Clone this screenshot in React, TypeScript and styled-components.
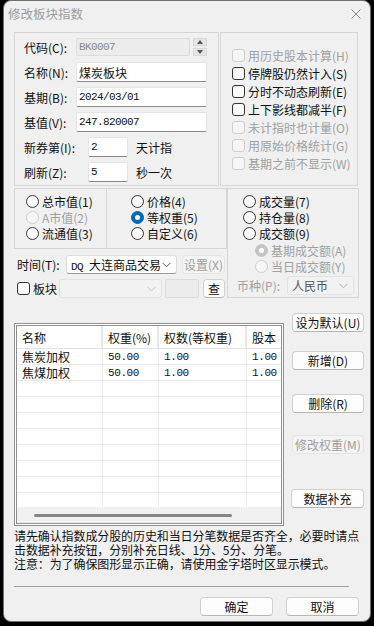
import React from "react";
import styled, { createGlobalStyle } from "styled-components";

const GlobalStyle = createGlobalStyle`
  * { box-sizing: border-box; }
  html, body {
    margin: 0;
    padding: 0;
    background: #000;
  }
  body {
    width: 374px;
    height: 626px;
    overflow: hidden;
    font-family: "Noto Sans CJK SC", "Noto Sans", sans-serif;
    font-size: 12px;
    color: #111;
  }
`;

const MONO = `"Liberation Mono", "Noto Sans CJK SC", monospace`;

const Dialog = styled.div`
  width: 368px;
  height: 622px;
  margin-left: 3px;
  background: #f0f0f0;
  border: 1px solid #707070;
  border-radius: 8px;
  overflow: hidden;
  display: flex;
  flex-direction: column;
`;

const TitleBar = styled.div`
  height: 31px;
  flex: none;
  display: flex;
  align-items: center;
  justify-content: space-between;
  padding: 0 9px 6px 4px;
  color: #9c9c9c;
  font-size: 12.5px;
`;

const Body = styled.div`
  padding-left: 10px;
  display: flex;
  flex-direction: column;
`;

const Row = styled.div<{ $gap?: number; $mt?: number }>`
  display: flex;
  gap: ${(p) => p.$gap ?? 0}px;
  margin-top: ${(p) => p.$mt ?? 0}px;
`;

const GroupBox = styled.div<{ $w: number; $h: number; $pt?: number; $pl?: number }>`
  width: ${(p) => p.$w}px;
  height: ${(p) => p.$h}px;
  flex: none;
  border: 1px solid #d6d6d6;
  padding: ${(p) => p.$pt ?? 0}px 0 0 ${(p) => p.$pl ?? 0}px;
  & + & {
    margin-left: -1px;
  }
`;

const FieldRow = styled.div<{ $mt?: number }>`
  display: flex;
  align-items: center;
  height: 20px;
  margin-top: ${(p) => p.$mt ?? 0}px;
`;

const Label = styled.span<{ $w: number; $disabled?: boolean }>`
  width: ${(p) => p.$w}px;
  flex: none;
  white-space: nowrap;
  color: ${(p) => (p.$disabled ? "#a0a0a0" : "#111")};
`;

const Field = styled.div<{ $w: number; $h?: number; $mono?: boolean; $disabled?: boolean }>`
  width: ${(p) => p.$w}px;
  height: ${(p) => p.$h ?? 20}px;
  flex: none;
  display: flex;
  align-items: center;
  padding-left: 2px;
  background: ${(p) => (p.$disabled ? "#ececec" : "#ffffff")};
  border: 1px solid ${(p) => (p.$disabled ? "#dcdcdc" : "#e4e4e4")};
  border-bottom-color: ${(p) => (p.$disabled ? "#dcdcdc" : "#8a8a8a")};
  border-radius: 2px;
  color: ${(p) => (p.$disabled ? "#8a8a8a" : "#111")};
  font-family: ${(p) => (p.$mono ? MONO : "inherit")};
  font-size: ${(p) => (p.$mono ? "11px" : "12px")};
  letter-spacing: ${(p) => (p.$mono ? "-0.6px" : "0")};
  white-space: nowrap;
  overflow: hidden;
`;

const Suffix = styled.span`
  margin-left: 8px;
`;

const Spin = styled.div`
  width: 14px;
  height: 18px;
  margin-left: 3px;
  display: flex;
  flex-direction: column;
  justify-content: space-between;
`;

const SpinPart = styled.div`
  height: 8px;
  background: #e6e6e6;
  border: 1px solid #d8d8d8;
  display: flex;
  align-items: center;
  justify-content: center;
`;

const OptionRow = styled.div<{ $h?: number; $indent?: number; $mt?: number }>`
  display: flex;
  align-items: center;
  gap: 3px;
  height: ${(p) => p.$h ?? 16}px;
  margin-left: ${(p) => p.$indent ?? 0}px;
  margin-top: ${(p) => p.$mt ?? 0}px;
  white-space: nowrap;
`;

const OptionText = styled.span<{ $disabled?: boolean }>`
  color: ${(p) => (p.$disabled ? "#a0a0a0" : "#111")};
`;

const Check = styled.span<{ $disabled?: boolean }>`
  width: 13px;
  height: 13px;
  flex: none;
  border: 1px solid ${(p) => (p.$disabled ? "#cfcfcf" : "#333")};
  border-radius: 3px;
  background: ${(p) => (p.$disabled ? "#f6f6f6" : "#fbfbfb")};
`;

const Radio = styled.span<{ $checked?: boolean; $disabled?: boolean }>`
  width: 13px;
  height: 13px;
  flex: none;
  border-radius: 50%;
  display: flex;
  align-items: center;
  justify-content: center;
  border: 1px solid
    ${(p) => (p.$checked ? (p.$disabled ? "#c4c4c4" : "#0067c0") : p.$disabled ? "#cfcfcf" : "#333")};
  background: ${(p) => (p.$checked ? (p.$disabled ? "#c4c4c4" : "#0067c0") : p.$disabled ? "#f6f6f6" : "#fbfbfb")};
  &::after {
    content: "";
    display: ${(p) => (p.$checked ? "block" : "none")};
    width: 5px;
    height: 5px;
    border-radius: 50%;
    background: #fff;
  }
`;

const Select = styled.div<{ $w: number; $disabled?: boolean }>`
  width: ${(p) => p.$w}px;
  height: 19px;
  flex: none;
  display: flex;
  align-items: center;
  justify-content: space-between;
  padding: 0 5px 0 4px;
  background: ${(p) => (p.$disabled ? "#f2f2f2" : "#fff")};
  border: 1px solid ${(p) => (p.$disabled ? "#e2e2e2" : "#dcdcdc")};
  border-bottom-color: ${(p) => (p.$disabled ? "#e2e2e2" : "#9a9a9a")};
  border-radius: 3px;
  white-space: nowrap;
  color: ${(p) => (p.$disabled ? "#555" : "#111")};
`;

const Mono = styled.span`
  font-family: ${MONO};
  font-size: 11px;
  letter-spacing: -0.6px;
  margin-right: 6px;
`;

const Button = styled.div<{ $w: number; $h?: number; $mt?: number; $ml?: number; $disabled?: boolean }>`
  width: ${(p) => p.$w}px;
  height: ${(p) => p.$h ?? 19}px;
  margin-top: ${(p) => p.$mt ?? 0}px;
  margin-left: ${(p) => p.$ml ?? 0}px;
  flex: none;
  display: flex;
  align-items: center;
  justify-content: center;
  white-space: nowrap;
  background: ${(p) => (p.$disabled ? "#f4f4f4" : "#fdfdfd")};
  border: 1px solid ${(p) => (p.$disabled ? "#e4e4e4" : "#d0d0d0")};
  border-bottom-color: ${(p) => (p.$disabled ? "#e4e4e4" : "#b5b5b5")};
  border-radius: 4px;
  color: ${(p) => (p.$disabled ? "#a0a0a0" : "#111")};
`;

const LeftCol = styled.div`
  width: 213px;
  flex: none;
  display: flex;
  flex-direction: column;
`;

const ToolRow = styled.div<{ $mt: number }>`
  display: flex;
  align-items: center;
  height: 19px;
  margin-top: ${(p) => p.$mt}px;
  padding-left: 3px;
`;

const CheckLabel = styled.div`
  width: 42px;
  flex: none;
  display: flex;
  align-items: center;
  gap: 3px;
`;

const Table = styled.div`
  width: 270px;
  height: 203px;
  margin-top: 10px;
  flex: none;
  border: 3px double #8f8f8f;
  background: #fff;
  display: flex;
  flex-direction: column;
  overflow: hidden;
`;

const GridRow = styled.div<{ $header?: boolean }>`
  display: grid;
  grid-template-columns: 86px 56px 88px 60px;
  height: ${(p) => (p.$header ? 23 : 16)}px;
  flex: none;
  border-bottom: 1px solid ${(p) => (p.$header ? "#e2e2e2" : "#ececec")};
`;

const Cell = styled.div<{ $header?: boolean; $mono?: boolean }>`
  display: flex;
  align-items: center;
  padding-left: 5px;
  white-space: nowrap;
  overflow: hidden;
  border-right: ${(p) => (p.$header ? "2px solid #e6e6e6" : "1px solid #ececec")};
  font-family: ${(p) => (p.$mono ? MONO : "inherit")};
  font-size: ${(p) => (p.$mono ? "11px" : "12px")};
  letter-spacing: ${(p) => (p.$mono ? "-0.4px" : "0")};
`;

const Rows = styled.div`
  flex: 1;
  overflow: hidden;
`;

const HScroll = styled.div`
  height: 16px;
  flex: none;
  background: #f0f0f0;
  display: flex;
  align-items: center;
  padding-left: 17px;
`;

const Thumb = styled.div`
  width: 198px;
  height: 3px;
  border-radius: 2px;
  background: #858585;
`;

const ButtonCol = styled.div`
  margin-left: 8px;
  display: flex;
  flex-direction: column;
`;

const Notes = styled.div`
  margin-top: 3px;
  line-height: 14px;
  white-space: nowrap;
  letter-spacing: -0.1px;
`;

const Separator = styled.div`
  width: 335px;
  height: 1px;
  margin-top: 15px;
  background: #a0a0a0;
`;

const Footer = styled.div`
  width: 345px;
  margin-top: 10px;
  display: flex;
  justify-content: flex-end;
  gap: 13px;
`;

const Chevron = ({ color = "#555" }: { color?: string }) => (
  <svg width="9" height="6" viewBox="0 0 9 6">
    <polyline points="0.5,0.8 4.5,4.8 8.5,0.8" fill="none" stroke={color} strokeWidth="1" />
  </svg>
);

const Tri = ({ up }: { up?: boolean }) => (
  <svg width="6" height="4" viewBox="0 0 6 4">
    <polygon points={up ? "0,4 3,0 6,4" : "0,0 3,4 6,0"} fill="#555" />
  </svg>
);

const tableRows = [
  ["焦炭加权", "50.00", "1.00", "1.00"],
  ["焦煤加权", "50.00", "1.00", "1.00"],
];

const checks: [string, boolean][] = [
  ["用历史股本计算(H)", true],
  ["停牌股仍然计入(S)", false],
  ["分时不动态刷新(E)", false],
  ["上下影线都减半(F)", false],
  ["未计指时也计量(O)", true],
  ["用原始价格统计(G)", true],
  ["基期之前不显示(W)", true],
];

export default function App() {
  return (
    <>
      <GlobalStyle />
      <Dialog>
        <TitleBar>
          <span>修改板块指数</span>
          <svg width="10" height="10" viewBox="0 0 10 10">
            <path d="M0.5 0.5 L9.5 9.5 M9.5 0.5 L0.5 9.5" stroke="#8a8a8a" strokeWidth="1" />
          </svg>
        </TitleBar>
        <Body>
          <Row $gap={2}>
            <GroupBox $w={205} $h={154} $pt={4} $pl={9}>
              <FieldRow>
                <Label $w={52}>代码(C):</Label>
                <Field $w={114} $h={18} $mono $disabled>
                  BK0007
                </Field>
                <Spin>
                  <SpinPart>
                    <Tri up />
                  </SpinPart>
                  <SpinPart>
                    <Tri />
                  </SpinPart>
                </Spin>
              </FieldRow>
              <FieldRow $mt={5}>
                <Label $w={52}>名称(N):</Label>
                <Field $w={131}>煤炭板块</Field>
              </FieldRow>
              <FieldRow $mt={5}>
                <Label $w={52}>基期(B):</Label>
                <Field $w={131} $mono>
                  2024/03/01
                </Field>
              </FieldRow>
              <FieldRow $mt={5}>
                <Label $w={52}>基值(V):</Label>
                <Field $w={131} $mono>
                  247.820007
                </Field>
              </FieldRow>
              <FieldRow $mt={5}>
                <Label $w={64}>新券第(I):</Label>
                <Field $w={40} $mono>
                  2
                </Field>
                <Suffix>天计指</Suffix>
              </FieldRow>
              <FieldRow $mt={5}>
                <Label $w={64}>刷新(Z):</Label>
                <Field $w={40} $mono>
                  5
                </Field>
                <Suffix>秒一次</Suffix>
              </FieldRow>
            </GroupBox>
            <GroupBox $w={138} $h={154} $pt={13} $pl={11}>
              {checks.map(([text, disabled]) => (
                <OptionRow key={text} $h={18}>
                  <Check $disabled={disabled} />
                  <OptionText $disabled={disabled}>{text}</OptionText>
                </OptionRow>
              ))}
            </GroupBox>
          </Row>

          <Row $mt={2}>
            <LeftCol>
              <Row>
                <GroupBox $w={93} $h={61} $pt={4} $pl={11}>
                  <OptionRow>
                    <Radio />
                    <OptionText>总市值(1)</OptionText>
                  </OptionRow>
                  <OptionRow>
                    <Radio $disabled />
                    <OptionText $disabled>A市值(2)</OptionText>
                  </OptionRow>
                  <OptionRow>
                    <Radio />
                    <OptionText>流通值(3)</OptionText>
                  </OptionRow>
                </GroupBox>
                <GroupBox $w={121} $h={61} $pt={4} $pl={24}>
                  <OptionRow>
                    <Radio />
                    <OptionText>价格(4)</OptionText>
                  </OptionRow>
                  <OptionRow>
                    <Radio $checked />
                    <OptionText>等权重(5)</OptionText>
                  </OptionRow>
                  <OptionRow>
                    <Radio />
                    <OptionText>自定义(6)</OptionText>
                  </OptionRow>
                </GroupBox>
              </Row>
              <ToolRow $mt={6}>
                <Label $w={49}>时间(T):</Label>
                <Select $w={111}>
                  <span>
                    <Mono>DQ</Mono>大连商品交易
                  </span>
                  <Chevron />
                </Select>
                <Button $w={43} $ml={5} $disabled>
                  设置(X)
                </Button>
              </ToolRow>
              <ToolRow $mt={5}>
                <CheckLabel>
                  <Check />
                  <span>板块</span>
                </CheckLabel>
                <Select $w={103} $disabled>
                  <span />
                  <Chevron color="#c4c4c4" />
                </Select>
                <Field $w={34} $h={19} $disabled style={{ marginLeft: 3 }} />
                <Button $w={22} $ml={4}>
                  查
                </Button>
              </ToolRow>
            </LeftCol>
            <GroupBox $w={132} $h={110} $pt={4} $pl={15}>
              <OptionRow>
                <Radio />
                <OptionText>成交量(7)</OptionText>
              </OptionRow>
              <OptionRow>
                <Radio />
                <OptionText>持仓量(8)</OptionText>
              </OptionRow>
              <OptionRow>
                <Radio />
                <OptionText>成交额(9)</OptionText>
              </OptionRow>
              <OptionRow $indent={12} $mt={1}>
                <Radio $checked $disabled />
                <OptionText $disabled>基期成交额(A)</OptionText>
              </OptionRow>
              <OptionRow $indent={12}>
                <Radio $disabled />
                <OptionText $disabled>当日成交额(Y)</OptionText>
              </OptionRow>
              <OptionRow $indent={-6} $mt={2} $h={19}>
                <Label $w={47} $disabled>
                  币种(P):
                </Label>
                <Select $w={67} $disabled>
                  <span>人民币</span>
                  <Chevron color="#b0b0b0" />
                </Select>
              </OptionRow>
            </GroupBox>
          </Row>

          <Row $mt={15}>
            <Table>
              <GridRow $header>
                <Cell $header>名称</Cell>
                <Cell $header>权重(%)</Cell>
                <Cell $header>权数(等权重)</Cell>
                <Cell $header>股本</Cell>
              </GridRow>
              <Rows>
                {Array.from({ length: 10 }).map((_, i) => {
                  const r = tableRows[i] ?? ["", "", "", ""];
                  return (
                    <GridRow key={i}>
                      <Cell>{r[0]}</Cell>
                      <Cell $mono>{r[1]}</Cell>
                      <Cell $mono>{r[2]}</Cell>
                      <Cell $mono>{r[3]}</Cell>
                    </GridRow>
                  );
                })}
              </Rows>
              <HScroll>
                <Thumb />
              </HScroll>
            </Table>
            <ButtonCol>
              <Button $w={72}>设为默认(U)</Button>
              <Button $w={72} $mt={19}>
                新增(D)
              </Button>
              <Button $w={72} $mt={24}>
                删除(R)
              </Button>
              <Button $w={72} $mt={22} $disabled>
                修改权重(M)
              </Button>
              <Button $w={73} $mt={35} $ml={-1}>
                数据补充
              </Button>
            </ButtonCol>
          </Row>

          <Notes>
            请先确认指数成分股的历史和当日分笔数据是否齐全，必要时请点
            <br />
            击数据补充按钮，分别补充日线、1分、5分、分笔。
            <br />
            注意：为了确保图形显示正确，请使用金字塔时区显示模式。
          </Notes>
          <Separator />
          <Footer>
            <Button $w={73}>确定</Button>
            <Button $w={73}>取消</Button>
          </Footer>
        </Body>
      </Dialog>
    </>
  );
}
